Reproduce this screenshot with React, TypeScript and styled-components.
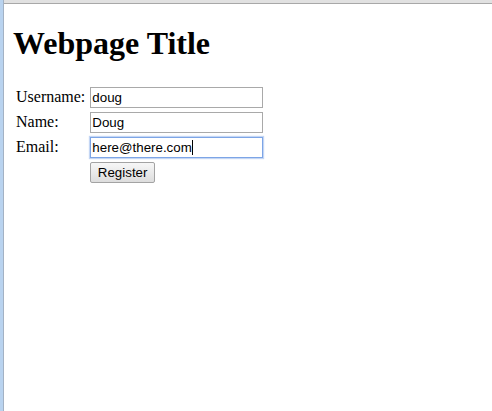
import React from "react";
import styled, { createGlobalStyle } from "styled-components";

const GlobalStyle = createGlobalStyle`
  html, body {
    margin: 0;
    padding: 0;
    background: #ffffff;
  }
  #root {
    min-height: 100vh;
  }
`;

const Frame = styled.div`
  display: flex;
  min-height: 100vh;
  background: #ffffff;
`;

const LeftEdge = styled.div`
  width: 3px;
  flex: none;
  background: #b9d3ef;
  border-right: 1px solid #a3b2c4;
`;

const Main = styled.div`
  flex: 1;
  display: flex;
  flex-direction: column;
`;

const TopBar = styled.div`
  height: 3px;
  flex: none;
  background: #e1e1e1;
  border-bottom: 1px solid #a8a8a8;
`;

const Page = styled.div`
  padding: 21.44px 9px 8px 9px;
  font-family: "Liberation Serif", "Times New Roman", serif;
  font-size: 16px;
  color: #000;
`;

const Title = styled.h1`
  margin: 0 0 21.44px 0;
  font-family: "Liberation Serif", "Times New Roman", serif;
  font-size: 32px;
  font-weight: bold;
  line-height: normal;
`;

const Form = styled.form`
  display: grid;
  grid-template-columns: auto auto;
  justify-content: start;
  column-gap: 5px;
  row-gap: 4px;
  padding: 3px 0 0 3px;
`;

const Label = styled.label`
  align-self: center;
  font-family: "Liberation Serif", "Times New Roman", serif;
  font-size: 16px;
  white-space: nowrap;
`;

const FieldWrap = styled.div`
  position: relative;
  width: 173px;
  height: 21px;
`;

const TextInput = styled.input<{ $focused?: boolean }>`
  box-sizing: border-box;
  width: 173px;
  height: 21px;
  margin: 0;
  padding: 0 1px;
  border: 1px solid ${(p) => (p.$focused ? "#7da5e6" : "#a9a9a9")};
  box-shadow: ${(p) => (p.$focused ? "0 0 1px 1px rgba(125,165,230,0.45)" : "none")};
  border-radius: 0;
  outline: none;
  background: #fff;
  color: #000;
  font-family: "Liberation Sans", Arial, sans-serif;
  font-size: 13.33px;
`;

const Caret = styled.span`
  position: absolute;
  left: 2px;
  top: 0;
  height: 21px;
  display: flex;
  align-items: center;
  color: transparent;
  font-family: "Liberation Sans", Arial, sans-serif;
  font-size: 13.33px;
  white-space: pre;
  pointer-events: none;
  &::after {
    content: "";
    display: inline-block;
    width: 1px;
    height: 15px;
    background: #000;
  }
`;

const Button = styled.button`
  grid-column: 2;
  justify-self: start;
  box-sizing: border-box;
  height: 21px;
  margin: 0;
  padding: 0 6.5px;
  border: 1px solid #a3a3a3;
  border-radius: 2px;
  background: linear-gradient(#f7f7f7, #dddddd);
  color: #000;
  font-family: "Liberation Sans", Arial, sans-serif;
  font-size: 13.33px;
  line-height: 19px;
`;

const fields = [
  { id: "username", label: "Username:", value: "doug" },
  { id: "name", label: "Name:", value: "Doug" },
  { id: "email", label: "Email:", value: "here@there.com", focused: true },
];

export default function App() {
  return (
    <>
      <GlobalStyle />
      <Frame>
        <LeftEdge />
        <Main>
          <TopBar />
          <Page>
            <Title>Webpage Title</Title>
            <Form onSubmit={(e) => e.preventDefault()}>
              {fields.map((f) => (
                <React.Fragment key={f.id}>
                  <Label htmlFor={f.id}>{f.label}</Label>
                  <FieldWrap>
                    <TextInput
                      id={f.id}
                      type="text"
                      defaultValue={f.value}
                      $focused={f.focused}
                    />
                    {f.focused && <Caret aria-hidden="true">{f.value}</Caret>}
                  </FieldWrap>
                </React.Fragment>
              ))}
              <Button type="submit">Register</Button>
            </Form>
          </Page>
        </Main>
      </Frame>
    </>
  );
}
